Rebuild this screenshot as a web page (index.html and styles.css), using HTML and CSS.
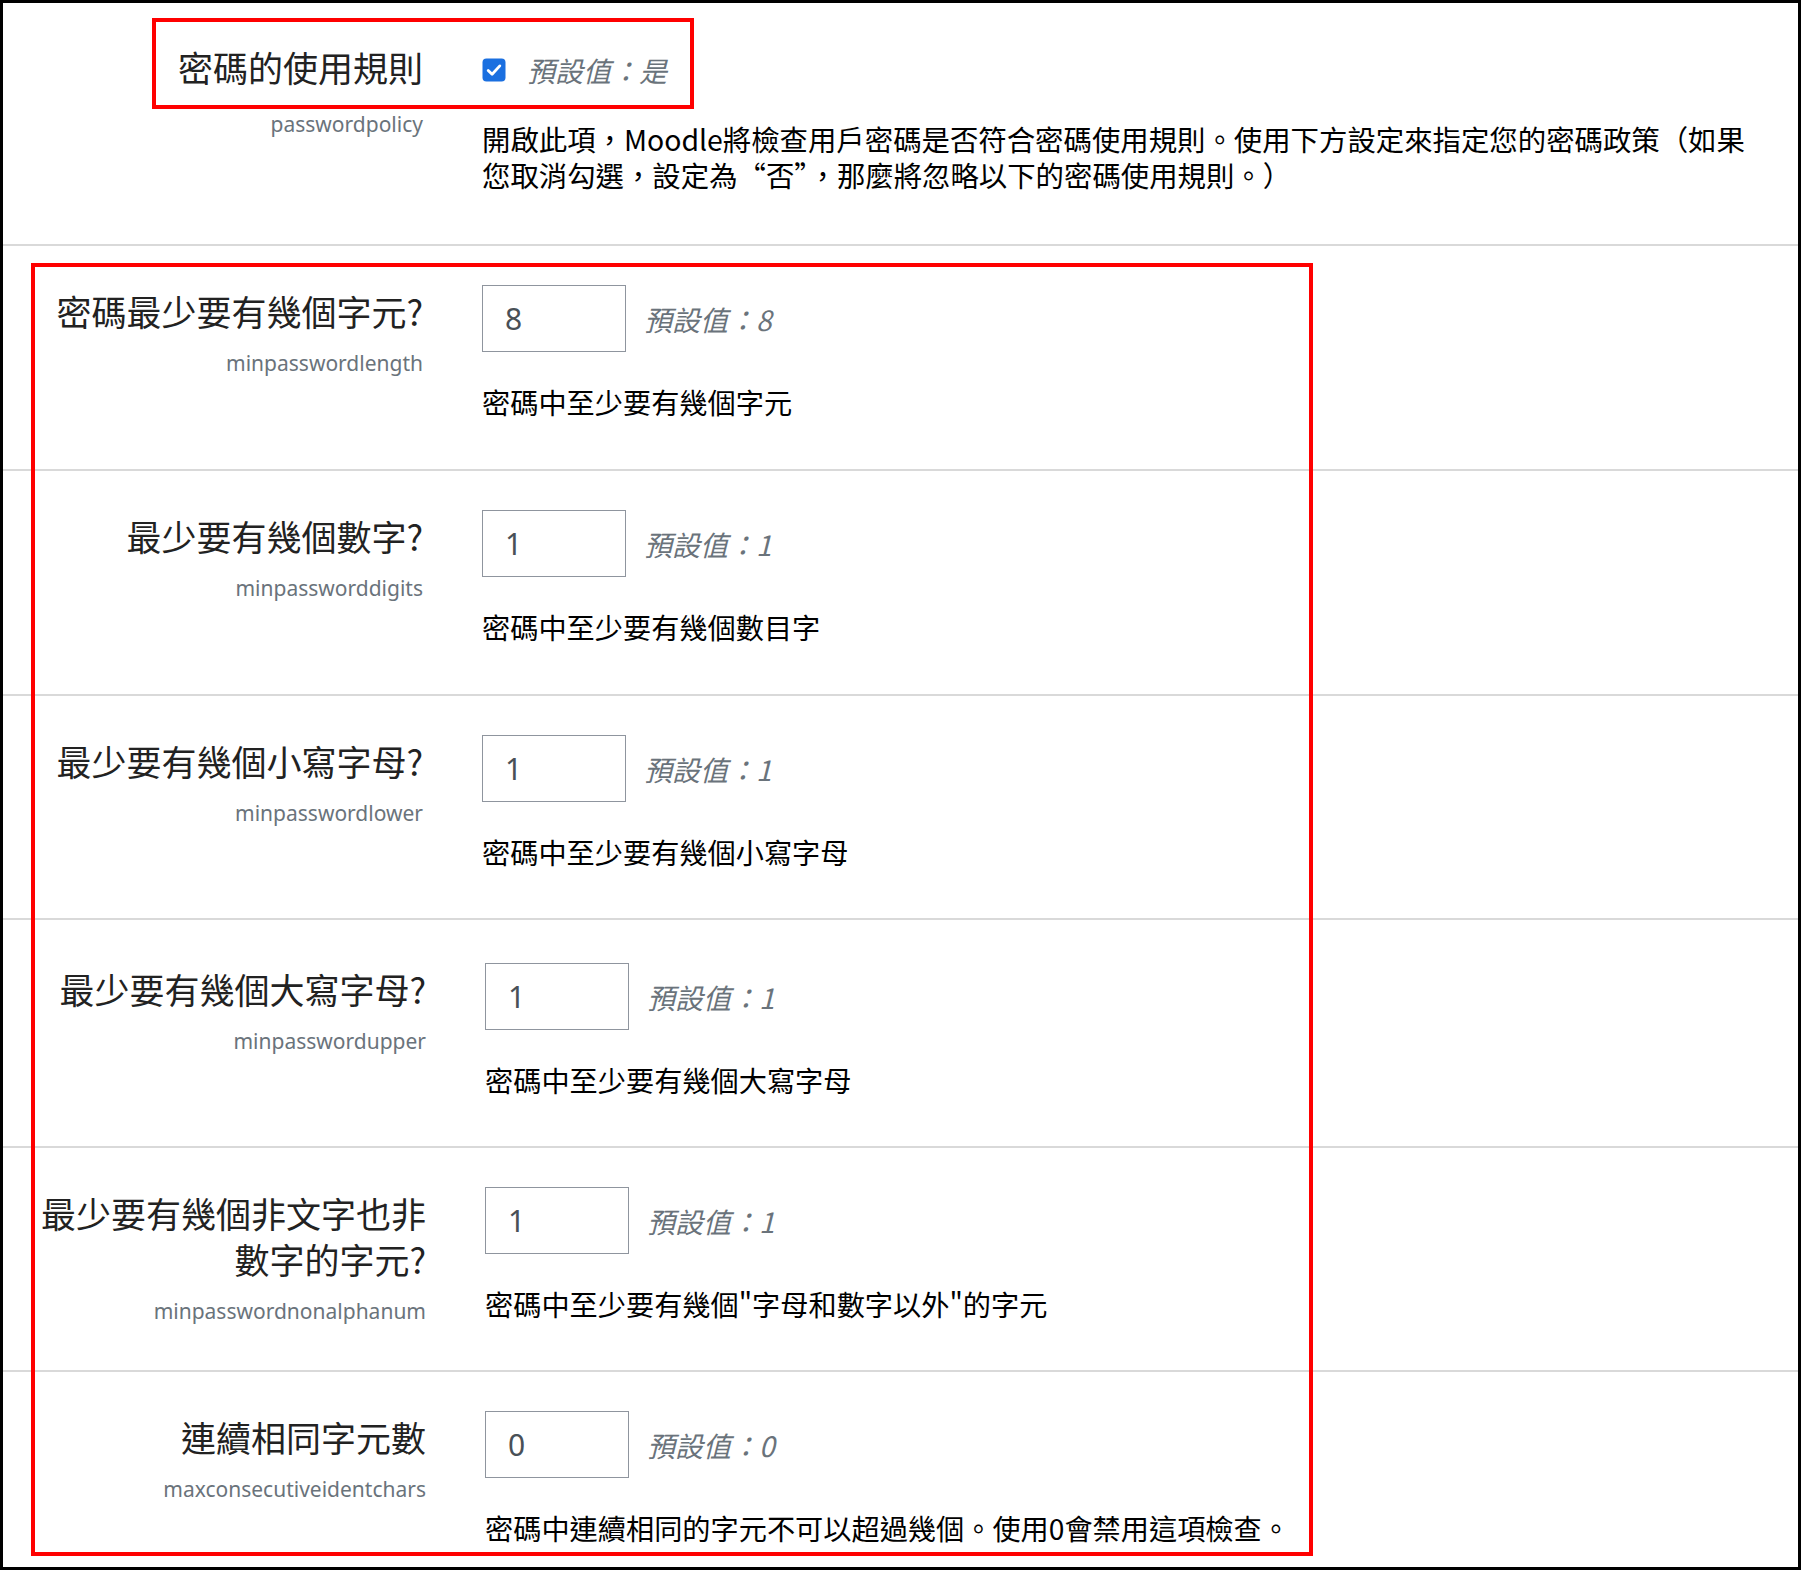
FILE: index.html
```html
<!DOCTYPE html>
<html lang="zh-Hant">
<head>
<meta charset="utf-8">
<title>密碼的使用規則</title>
<link rel="stylesheet" href="styles.css">
</head>
<body>
<div class="frame">
  <section class="row row-policy">
    <div class="labelcol">
      <div class="label">密碼的使用規則</div>
      <div class="name">passwordpolicy</div>
    </div>
    <div class="fieldcol">
      <div class="control control-check">
        <span class="check"><svg width="24" height="24" viewBox="0 0 24 24"><rect x="0.5" y="0.5" width="23" height="23" rx="4" fill="#1a6fe0"/><path d="M6.2 12.4l3.9 3.9 7.7-8.4" fill="none" stroke="#fff" stroke-width="2.8" stroke-linecap="round" stroke-linejoin="round"/></svg></span>
        <span class="default">預設值：是</span>
      </div>
      <div class="desc desc-wide"><span class="line">開啟此項，Moodle將檢查用戶密碼是否符合密碼使用規則。使用下方設定來指定您的密碼政策（如果</span><span class="line">您取消勾選，設定為“否”，那麼將忽略以下的密碼使用規則。）</span></div>
    </div>
  </section>

  <section class="row h225">
    <div class="labelcol">
      <div class="label">密碼最少要有幾個字元?</div>
      <div class="name">minpasswordlength</div>
    </div>
    <div class="fieldcol">
      <div class="control">
        <input class="num" type="text" value="8">
        <span class="default">預設值：8</span>
      </div>
      <div class="desc">密碼中至少要有幾個字元</div>
    </div>
  </section>

  <section class="row h225">
    <div class="labelcol">
      <div class="label">最少要有幾個數字?</div>
      <div class="name">minpassworddigits</div>
    </div>
    <div class="fieldcol">
      <div class="control">
        <input class="num" type="text" value="1">
        <span class="default">預設值：1</span>
      </div>
      <div class="desc">密碼中至少要有幾個數目字</div>
    </div>
  </section>

  <section class="row h224">
    <div class="labelcol">
      <div class="label">最少要有幾個小寫字母?</div>
      <div class="name">minpasswordlower</div>
    </div>
    <div class="fieldcol">
      <div class="control">
        <input class="num" type="text" value="1">
        <span class="default">預設值：1</span>
      </div>
      <div class="desc">密碼中至少要有幾個小寫字母</div>
    </div>
  </section>

  <section class="row h228 shift drop">
    <div class="labelcol">
      <div class="label">最少要有幾個大寫字母?</div>
      <div class="name">minpasswordupper</div>
    </div>
    <div class="fieldcol">
      <div class="control">
        <input class="num" type="text" value="1">
        <span class="default">預設值：1</span>
      </div>
      <div class="desc">密碼中至少要有幾個大寫字母</div>
    </div>
  </section>

  <section class="row h224 shift">
    <div class="labelcol">
      <div class="label">最少要有幾個非文字也非數字的字元?</div>
      <div class="name">minpasswordnonalphanum</div>
    </div>
    <div class="fieldcol">
      <div class="control">
        <input class="num" type="text" value="1">
        <span class="default">預設值：1</span>
      </div>
      <div class="desc">密碼中至少要有幾個"字母和數字以外"的字元</div>
    </div>
  </section>

  <section class="row last shift">
    <div class="labelcol">
      <div class="label">連續相同字元數</div>
      <div class="name">maxconsecutiveidentchars</div>
    </div>
    <div class="fieldcol">
      <div class="control">
        <input class="num" type="text" value="0">
        <span class="default">預設值：0</span>
      </div>
      <div class="desc">密碼中連續相同的字元不可以超過幾個。使用0會禁用這項檢查。</div>
    </div>
  </section>

  <div class="highlight hl-policy"></div>
  <div class="highlight hl-rules"></div>
</div>
</body>
</html>
```

FILE: styles.css
```css
html, body {
  margin: 0;
  padding: 0;
  background: #fff;
}

body {
  width: 1801px;
  height: 1572px;
  font-family: "Noto Sans", "Noto Sans CJK TC", sans-serif;
  color: #1d2125;
}

.frame {
  position: relative;
  box-sizing: border-box;
  width: 1801px;
  height: 1570px;
  border: 3px solid #000;
  background: #fff;
  overflow: hidden;
  display: flex;
  flex-direction: column;
}

.row {
  box-sizing: border-box;
  display: grid;
  grid-template-columns: 420px 1fr;
  column-gap: 59px;
  border-top: 2px solid #d9d9d9;
  flex: none;
}

.row-policy {
  height: 241px;
  border-top: none;
}

.h225 { height: 225px; }
.h224 { height: 224px; }
.h228 { height: 228px; }
.last { flex: 1 1 auto; }

.shift .labelcol,
.shift .fieldcol {
  position: relative;
  left: 3px;
}

.drop { padding-top: 4px; }

.labelcol {
  padding-left: 20px;
  text-align: right;
}

.label {
  font-family: "Noto Sans CJK TC", "Noto Sans", sans-serif;
  font-size: 35px;
  line-height: 46px;
  color: #222;
  margin-top: 42px;
}

.row-policy .label { margin-top: 41px; }

.name {
  font-size: 21px;
  line-height: 30px;
  color: #6a737b;
  margin-top: 14px;
}

.row-policy .name { margin-top: 19px; }

.fieldcol {
  min-width: 0;
}

.control {
  display: flex;
  align-items: center;
  gap: 18px;
  margin-top: 39px;
  height: 67px;
}

.control-check {
  margin-top: 43px;
  height: 47px;
  gap: 21px;
}

.check {
  display: block;
  width: 24px;
  height: 24px;
}

.check svg { display: block; }

.num {
  box-sizing: border-box;
  width: 144px;
  height: 67px;
  margin: 0;
  padding: 0 0 0 22px;
  border: 1px solid #8f959e;
  border-radius: 0;
  background: #fff;
  font-family: "Noto Sans", sans-serif;
  font-size: 30px;
  color: #495057;
  outline: none;
}

.default {
  font-family: "Noto Sans CJK TC", "Noto Sans", sans-serif;
  font-style: italic;
  font-size: 28px;
  color: #6a737b;
}

.desc {
  font-family: "Noto Sans CJK TC", "Noto Sans", sans-serif;
  font-size: 28.2px;
  line-height: 36px;
  color: #000;
  margin-top: 32px;
  white-space: nowrap;
}

.desc-wide {
  font-size: 28.4px;
  margin-top: 28px;
}

.desc-wide .line {
  display: block;
  height: 36px;
}

.highlight {
  position: absolute;
  box-sizing: border-box;
  border: 4px solid #ff0000;
  pointer-events: none;
}

.hl-policy {
  left: 149px;
  top: 15px;
  width: 542px;
  height: 91px;
}

.hl-rules {
  left: 28px;
  top: 260px;
  width: 1282px;
  height: 1293px;
}
```
